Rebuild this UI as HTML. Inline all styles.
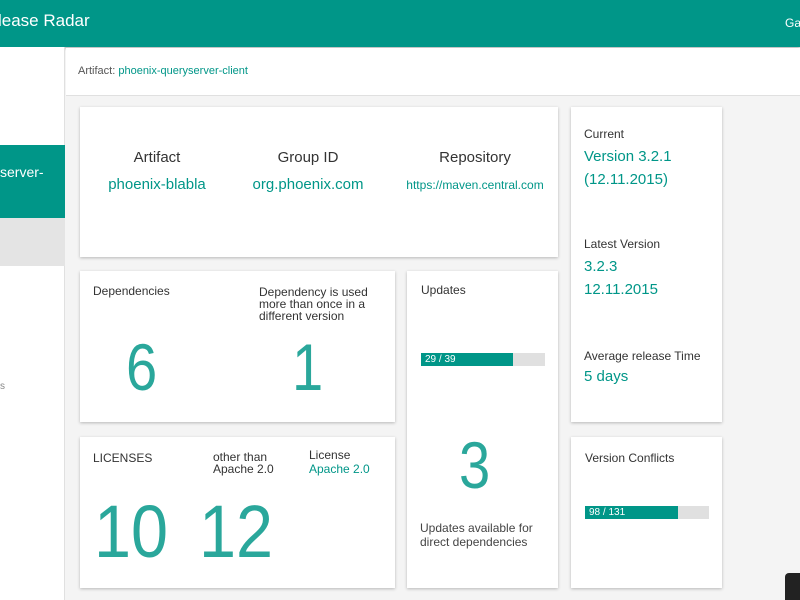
<!DOCTYPE html>
<html><head><meta charset="utf-8"><style>
*{margin:0;padding:0;box-sizing:border-box}
html,body{width:800px;height:600px;overflow:hidden}
body{background:#f4f4f4;font-family:"Liberation Sans",sans-serif;position:relative;color:#333}
.a{position:absolute;white-space:nowrap}
.card{position:absolute;background:#fff;box-shadow:0 1px 3px rgba(0,0,0,.25)}
.t{color:#009688}
.big{position:absolute;color:#2aa79b;font-weight:normal;line-height:1;transform-origin:0 0}
.bar{position:absolute;height:13px;background:#e0e0e0}
.bar div{height:13px;background:#009688;color:#fff;font-size:10px;line-height:13px;padding-left:4px}
.lb{font-size:12px;color:#333}
</style></head><body>
<div class="a" style="left:0;top:0;width:800px;height:47px;background:#009688;box-shadow:0 1px 3px rgba(0,0,0,.3)"></div>
<div class="a" style="left:-2px;top:11px;color:#fff;font-size:17px">lease Radar</div>
<div class="a" style="left:785px;top:16px;color:#fff;font-size:12px">Gal</div>
<div class="a" style="left:0;top:47px;width:65px;height:553px;background:#fff;border-right:1px solid #e0e0e0"></div>
<div class="a" style="left:0;top:145px;width:65px;height:73px;background:#009688"></div>
<div class="a" style="left:0;top:164px;color:#fff;font-size:14px">server-</div>
<div class="a" style="left:0;top:218px;width:65px;height:48px;background:#e4e4e4"></div>
<div class="a" style="left:0;top:381px;color:#888;font-size:10px">s</div>
<div class="a" style="left:66px;top:48px;width:734px;height:48px;background:#fff;border-bottom:1px solid #e0e0e0"></div>
<div class="a" style="left:78px;top:65px;font-size:11px;color:#555">Artifact: <span class="t">phoenix-queryserver-client</span></div>

<div class="card" style="left:80px;top:107px;width:478px;height:150px"></div>
<div class="a" style="left:107px;top:149px;width:100px;text-align:center;font-size:15px;color:#333">Artifact</div>
<div class="a t" style="left:97px;top:176px;width:120px;text-align:center;font-size:15px">phoenix-blabla</div>
<div class="a" style="left:258px;top:149px;width:100px;text-align:center;font-size:15px">Group ID</div>
<div class="a t" style="left:238px;top:176px;width:140px;text-align:center;font-size:15px">org.phoenix.com</div>
<div class="a" style="left:415px;top:149px;width:120px;text-align:center;font-size:15px">Repository</div>
<div class="a t" style="left:400px;top:178px;width:150px;text-align:center;font-size:12px">https://maven.central.com</div>

<div class="card" style="left:571px;top:107px;width:151px;height:315px"></div>
<div class="a lb" style="left:584px;top:127px">Current</div>
<div class="a t" style="left:584px;top:145px;font-size:15px;line-height:23px">Version 3.2.1<br>(12.11.2015)</div>
<div class="a lb" style="left:584px;top:237px">Latest Version</div>
<div class="a t" style="left:584px;top:255px;font-size:15px;line-height:23px">3.2.3<br>12.11.2015</div>
<div class="a lb" style="left:584px;top:349px">Average release Time</div>
<div class="a t" style="left:584px;top:368px;font-size:15px">5 days</div>

<div class="card" style="left:80px;top:271px;width:315px;height:151px"></div>
<div class="a lb" style="left:93px;top:284px">Dependencies</div>
<div class="a lb" style="left:259px;top:286px;line-height:12px">Dependency is used<br>more than once in a<br>different version</div>
<div class="big" style="left:126px;top:334px;font-size:66px;transform:scaleX(.85)">6</div>
<div class="big" style="left:292px;top:334px;font-size:66px;transform:scaleX(.85)">1</div>

<div class="card" style="left:80px;top:437px;width:315px;height:151px"></div>
<div class="a lb" style="left:93px;top:451px">LICENSES</div>
<div class="a lb" style="left:213px;top:451px;line-height:12px">other than<br>Apache 2.0</div>
<div class="a lb" style="left:309px;top:448px">License</div>
<div class="a t" style="left:309px;top:462px;font-size:12px">Apache 2.0</div>
<div class="big" style="left:94px;top:495px;font-size:74px;transform:scaleX(.9)">10</div>
<div class="big" style="left:199px;top:495px;font-size:74px;transform:scaleX(.9)">12</div>

<div class="card" style="left:407px;top:271px;width:151px;height:317px"></div>
<div class="a lb" style="left:421px;top:283px">Updates</div>
<div class="bar" style="left:421px;top:353px;width:124px"><div style="width:92px">29 / 39</div></div>
<div class="big" style="left:459px;top:432px;font-size:66px;transform:scaleX(.85)">3</div>
<div class="a lb" style="left:420px;top:521px;line-height:14px;color:#444">Updates available for<br>direct dependencies</div>

<div class="card" style="left:571px;top:437px;width:151px;height:151px"></div>
<div class="a lb" style="left:585px;top:451px">Version Conflicts</div>
<div class="bar" style="left:585px;top:506px;width:124px"><div style="width:93px">98 / 131</div></div>

<div class="a" style="left:785px;top:573px;width:30px;height:40px;background:#222;border-radius:4px"></div>
</body></html>
